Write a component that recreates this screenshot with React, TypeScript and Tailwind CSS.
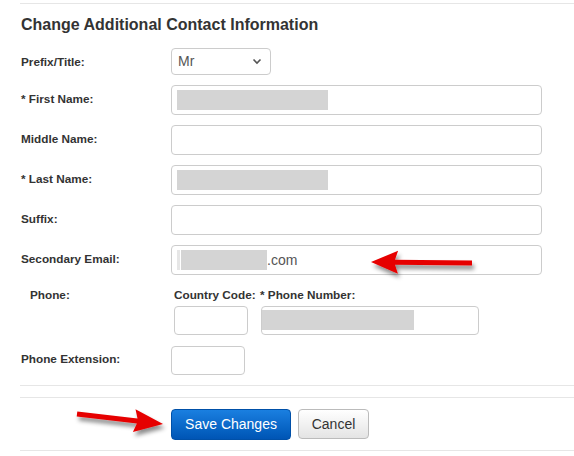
import React from "react";

type P = { x: number; y: number };

function arrowPoints(tail: P, tip: P, shaft: number, headLen: number, headW: number) {
  const dx = tip.x - tail.x;
  const dy = tip.y - tail.y;
  const len = Math.hypot(dx, dy);
  const ux = dx / len;
  const uy = dy / len;
  const nx = -uy;
  const ny = ux;
  const bx = tip.x - ux * headLen;
  const by = tip.y - uy * headLen;
  const pts: P[] = [
    { x: tail.x + (nx * shaft) / 2, y: tail.y + (ny * shaft) / 2 },
    { x: bx + (nx * shaft) / 2, y: by + (ny * shaft) / 2 },
    { x: bx - ux * 3 + (nx * headW) / 2, y: by - uy * 3 + (ny * headW) / 2 },
    tip,
    { x: bx - ux * 3 - (nx * headW) / 2, y: by - uy * 3 - (ny * headW) / 2 },
    { x: bx - (nx * shaft) / 2, y: by - (ny * shaft) / 2 },
    { x: tail.x - (nx * shaft) / 2, y: tail.y - (ny * shaft) / 2 },
  ];
  return pts.map((p) => `${p.x.toFixed(1)},${p.y.toFixed(1)}`).join(" ");
}

function Arrows() {
  const a1 = arrowPoints({ x: 472, y: 263 }, { x: 371, y: 262 }, 5, 24, 23);
  const a2 = arrowPoints({ x: 77, y: 414 }, { x: 163, y: 424 }, 5, 26, 23);
  return (
    <svg className="pointer-events-none absolute left-0 top-0" width="574" height="456" viewBox="0 0 574 456">
      <defs>
        <filter id="sh" x="-20%" y="-50%" width="140%" height="200%">
          <feDropShadow dx="2" dy="4" stdDeviation="2" floodColor="#000" floodOpacity="0.45" />
        </filter>
      </defs>
      <polygon points={a1} fill="#e60000" filter="url(#sh)" />
      <polygon points={a2} fill="#e60000" filter="url(#sh)" />
    </svg>
  );
}

function Label({ children, className = "" }: { children: React.ReactNode; className?: string }) {
  return (
    <div className={`w-[150px] shrink-0 text-[11.75px] font-bold leading-[14px] text-[#333] ${className}`}>
      {children}
    </div>
  );
}

function Input({ className = "", children }: { className?: string; children?: React.ReactNode }) {
  return <div className={`relative rounded-[4px] border border-[#cccccc] bg-white ${className}`}>{children}</div>;
}

export default function App() {
  return (
    <div className="relative h-[456px] w-[574px] overflow-hidden bg-white font-['Liberation_Sans',Arial,sans-serif] text-[#333]">
      <div className="pt-[3px]">
        <div className="ml-[20px] border-t border-[#e6e6e6]" />
      </div>
      <div className="mt-[11px] pl-[21px] text-[16px] font-bold leading-[20px] text-[#333]">
        Change Additional Contact Information
      </div>

      <div className="mt-[13px] flex flex-col pl-[21px]">
        <div className="flex items-center">
          <Label>Prefix/Title:</Label>
          <Input className="flex h-[27px] w-[100px] items-center justify-between pl-[6px] pr-[8px]">
            <span className="text-[14px] text-[#555]">Mr</span>
            <svg width="10" height="7" viewBox="0 0 10 7">
              <path d="M1.5 1.5 L5 5 L8.5 1.5" fill="none" stroke="#555" strokeWidth="1.6" />
            </svg>
          </Input>
        </div>

        <div className="mt-[10px] flex items-center">
          <Label className="mb-[3px]">* First Name:</Label>
          <Input className="h-[30px] w-[371px]">
            <div className="absolute left-[5px] top-[4px] h-[20px] w-[151px] bg-[#d4d4d4]" />
          </Input>
        </div>

        <div className="mt-[10px] flex items-center">
          <Label className="mb-[3px]">Middle Name:</Label>
          <Input className="h-[30px] w-[371px]" />
        </div>

        <div className="mt-[10px] flex items-center">
          <Label className="mb-[3px]">* Last Name:</Label>
          <Input className="h-[30px] w-[371px]">
            <div className="absolute left-[5px] top-[4px] h-[20px] w-[151px] bg-[#d4d4d4]" />
          </Input>
        </div>

        <div className="mt-[10px] flex items-center">
          <Label className="mb-[3px]">Suffix:</Label>
          <Input className="h-[30px] w-[371px]" />
        </div>

        <div className="mt-[10px] flex items-center">
          <Label className="mb-[3px]">Secondary Email:</Label>
          <Input className="flex h-[30px] w-[371px] items-center">
            <div className="ml-[5px] h-[20px] w-[3px] bg-[#e6e6e6]" />
            <div className="ml-[1px] h-[20px] w-[86px] bg-[#d4d4d4]" />
            <span className="ml-[0px] text-[14px] text-[#555]">.com</span>
          </Input>
        </div>

        <div className="mt-[13px] flex">
          <Label className="pl-[9px]">Phone:</Label>
          <div className="flex pl-[3px]">
            <div className="flex w-[86px] flex-col">
              <div className="whitespace-nowrap text-[11.75px] font-bold leading-[14px]">Country Code:</div>
              <Input className="mt-[4px] h-[29px] w-[74px]" />
            </div>
            <div className="flex flex-col">
              <div className="whitespace-nowrap text-[11.75px] font-bold leading-[14px]">* Phone Number:</div>
              <Input className="ml-[1px] mt-[4px] h-[29px] w-[218px]">
                <div className="absolute left-[0px] top-[3px] h-[20px] w-[152px] bg-[#d4d4d4]" />
              </Input>
            </div>
          </div>
        </div>

        <div className="mt-[11px] flex items-center">
          <Label className="mb-[3px]">Phone Extension:</Label>
          <Input className="h-[29px] w-[74px]" />
        </div>
      </div>

      <div className="ml-[20px] mt-[10px] border-t border-[#e6e6e6]" />
      <div className="ml-[20px] mt-[11px] border-t border-[#e6e6e6]" />

      <div className="mt-[11px] flex gap-[7px] pl-[171px]">
        <button className="h-[31px] w-[120px] rounded-[4px] border border-[#0050a8] bg-gradient-to-b from-[#1a7fe0] to-[#0055b5] text-[14px] text-white">
          Save Changes
        </button>
        <button className="h-[30px] w-[71px] rounded-[4px] border border-[#bbbbbb] bg-gradient-to-b from-[#ffffff] to-[#e4e4e4] text-[14px] text-[#333]">
          Cancel
        </button>
      </div>

      <div className="ml-[20px] mt-[10px] border-t border-[#e6e6e6]" />

      <Arrows />
    </div>
  );
}
